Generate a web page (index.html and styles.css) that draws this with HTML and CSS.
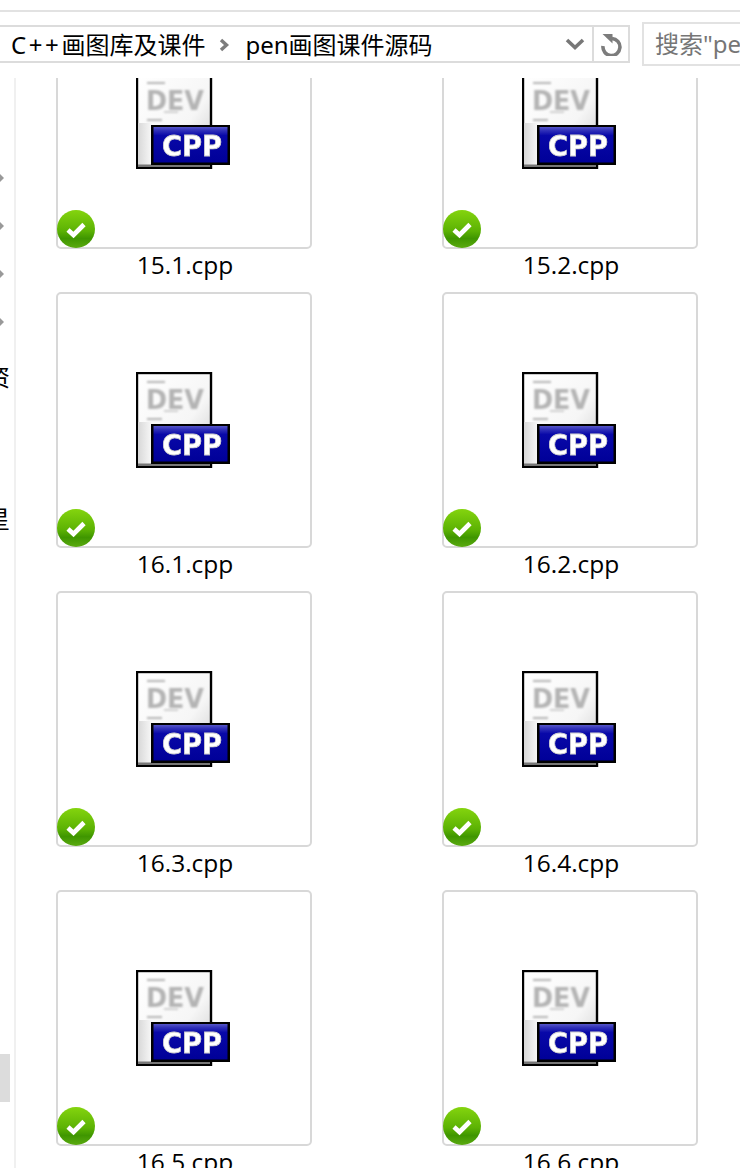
FILE: index.html
```html
<!DOCTYPE html>
<html lang="zh-CN">
<head>
    <meta charset="UTF-8">
    <meta name="viewport" content="width=device-width, initial-scale=1.0">
    <title>pen画图课件源码</title>
    <link rel="stylesheet" href="styles.css">
</head>
<body>
    <svg class="sprites" width="0" height="0" aria-hidden="true">
        <defs>
            <linearGradient id="pageFill" x1="0" y1="0" x2="1" y2="1">
                <stop offset="0" stop-color="#ffffff"/>
                <stop offset="0.6" stop-color="#f6f6f6"/>
                <stop offset="1" stop-color="#c8c8c8"/>
            </linearGradient>
            <linearGradient id="stripFill" x1="0" y1="0" x2="1" y2="0">
                <stop offset="0" stop-color="#d8d8d8"/>
                <stop offset="1" stop-color="#f8f8f8"/>
            </linearGradient>
            <linearGradient id="badgeFill" x1="0" y1="0" x2="0" y2="1">
                <stop offset="0" stop-color="#5656c8"/>
                <stop offset="0.1" stop-color="#3030b8"/>
                <stop offset="0.24" stop-color="#0808a8"/>
                <stop offset="1" stop-color="#000098"/>
            </linearGradient>
            <linearGradient id="okFill" x1="0" y1="0" x2="0" y2="1">
                <stop offset="0" stop-color="#84d40e"/>
                <stop offset="0.55" stop-color="#5cb204"/>
                <stop offset="0.75" stop-color="#3f9600"/>
                <stop offset="1" stop-color="#5aaa10"/>
            </linearGradient>
            <filter id="smudge"><feGaussianBlur stdDeviation="1.2"/></filter>
            <filter id="soft"><feGaussianBlur stdDeviation="0.3"/></filter>

            <symbol id="cppIcon" viewBox="0 0 96 96">
                <rect x="1" y="1" width="74" height="94" fill="url(#pageFill)" stroke="#000" stroke-width="2.4"/>
                <rect x="2" y="50" width="14" height="42" fill="url(#stripFill)"/>
                <rect x="2" y="91.5" width="72" height="2.5" fill="#777"/>
                <g filter="url(#smudge)" fill="#b4b4b4">
                    <rect x="11" y="9" width="18" height="2"/>
                    <rect x="11" y="46" width="15" height="2"/>
                    <rect x="28" y="38" width="14" height="2" opacity="0.6"/>
                </g>
                <text class="dev-text" x="39" y="37" text-anchor="middle" textLength="58" lengthAdjust="spacingAndGlyphs" filter="url(#smudge)">DEV</text>
                <rect x="15" y="52" width="79" height="40" fill="#000"/>
                <rect x="17.5" y="54" width="74" height="35.5" fill="url(#badgeFill)"/>
                <text class="cpp-text" x="56" y="83" text-anchor="middle" textLength="60" lengthAdjust="spacingAndGlyphs" filter="url(#soft)">CPP</text>
            </symbol>

            <symbol id="okBadge" viewBox="0 0 38 38">
                <circle cx="19" cy="19" r="19" fill="url(#okFill)"/>
                <path d="M11 20 L16.5 25 L27 14.5" fill="none" stroke="#fff" stroke-width="4.6"/>
            </symbol>
        </defs>
    </svg>

    <header class="toolbar">
        <div class="toolbar-row">
            <div class="address">
                <div class="crumbs">
                    <span><span class="plus">C++</span>画图库及课件</span>
                    <svg class="crumb-sep" viewBox="0 0 12 14"><path d="M3 2 L8.5 7 L3 12" fill="none" stroke="#7c7c7c" stroke-width="3.4"/></svg>
                    <span>pen画图课件源码</span>
                </div>
                <svg class="drop" viewBox="0 0 20 12"><path d="M2 2 L10 9.5 L18 2" fill="none" stroke="#777" stroke-width="3.6"/></svg>
                <div class="refresh">
                    <svg viewBox="0 0 24 24"><path d="M13 6.5 A8.5 8.5 0 1 1 4 14" fill="none" stroke="#7c7c7c" stroke-width="3.6"/><path d="M3.5 2 H13.5 V11.5 Z" fill="#7c7c7c"/></svg>
                </div>
            </div>
            <div class="search">搜索"pen画图课件源码"</div>
        </div>
    </header>

    <div class="main">
        <nav class="sidebar">
            <div class="nav-row"><span class="arrow"></span></div>
            <div class="nav-row"><span class="arrow"></span></div>
            <div class="nav-row"><span class="arrow"></span></div>
            <div class="nav-row"><span class="arrow"></span></div>
            <div class="nav-row nav-text">资</div>
            <div class="nav-gap"></div>
            <div class="nav-row nav-text">星</div>
            <div class="nav-active"></div>
        </nav>

        <section class="files">
            <div class="grid">
                <figure class="file">
                    <div class="thumb"><svg class="doc"><use href="#cppIcon"/></svg><svg class="ok"><use href="#okBadge"/></svg></div>
                    <figcaption>15.1.cpp</figcaption>
                </figure>
                <figure class="file">
                    <div class="thumb"><svg class="doc"><use href="#cppIcon"/></svg><svg class="ok"><use href="#okBadge"/></svg></div>
                    <figcaption>15.2.cpp</figcaption>
                </figure>
                <figure class="file">
                    <div class="thumb"><svg class="doc"><use href="#cppIcon"/></svg><svg class="ok"><use href="#okBadge"/></svg></div>
                    <figcaption>16.1.cpp</figcaption>
                </figure>
                <figure class="file">
                    <div class="thumb"><svg class="doc"><use href="#cppIcon"/></svg><svg class="ok"><use href="#okBadge"/></svg></div>
                    <figcaption>16.2.cpp</figcaption>
                </figure>
                <figure class="file">
                    <div class="thumb"><svg class="doc"><use href="#cppIcon"/></svg><svg class="ok"><use href="#okBadge"/></svg></div>
                    <figcaption>16.3.cpp</figcaption>
                </figure>
                <figure class="file">
                    <div class="thumb"><svg class="doc"><use href="#cppIcon"/></svg><svg class="ok"><use href="#okBadge"/></svg></div>
                    <figcaption>16.4.cpp</figcaption>
                </figure>
                <figure class="file">
                    <div class="thumb"><svg class="doc"><use href="#cppIcon"/></svg><svg class="ok"><use href="#okBadge"/></svg></div>
                    <figcaption>16.5.cpp</figcaption>
                </figure>
                <figure class="file">
                    <div class="thumb"><svg class="doc"><use href="#cppIcon"/></svg><svg class="ok"><use href="#okBadge"/></svg></div>
                    <figcaption>16.6.cpp</figcaption>
                </figure>
            </div>
        </section>
    </div>
</body>
</html>
```

FILE: styles.css
```css
html, body {
    margin: 0;
    height: 100%;
    overflow: hidden;
}

body {
    display: flex;
    flex-direction: column;
    background: #fff;
    color: #000;
    font-family: "Open Sans", "Noto Sans CJK SC", sans-serif;
}

.sprites {
    position: absolute;
}

.cpp-text {
    font-family: "DejaVu Sans", sans-serif;
    font-size: 28px;
    font-weight: bold;
    fill: #fff;
    stroke: #d0d0d0;
    stroke-width: 0.8px;
}

.dev-text {
    font-family: "DejaVu Sans", sans-serif;
    font-size: 26px;
    font-weight: bold;
    fill: #b4b4b4;
}

/* toolbar */
.toolbar {
    flex: none;
    height: 78px;
    box-sizing: border-box;
    padding-top: 10px;
}

.toolbar-row {
    height: 56px;
    box-sizing: border-box;
    border-top: 2px solid #e2e2e2;
    padding-top: 12px;
    display: flex;
    align-items: flex-start;
    gap: 12px;
}

.address {
    flex: none;
    width: 630px;
    height: 38px;
    margin-top: 1px;
    box-sizing: border-box;
    border: 2px solid #dcdcdc;
    border-left: none;
    display: flex;
    align-items: center;
    font-family: "Noto Sans", "Noto Sans CJK SC", sans-serif;
}

.crumbs {
    flex: 1;
    display: flex;
    align-items: center;
    padding: 2px 0 0 11px;
    font-size: 24px;
    line-height: 30px;
    white-space: nowrap;
}

.plus {
    letter-spacing: 2.6px;
}

.crumb-sep {
    width: 12px;
    height: 14px;
    margin: 0 15px 0 13px;
}

.drop {
    width: 20px;
    height: 12px;
    margin-right: 7px;
}

.refresh {
    width: 36px;
    height: 100%;
    box-sizing: border-box;
    border-left: 2px solid #dcdcdc;
    display: flex;
    align-items: center;
    justify-content: center;
}

.refresh svg {
    width: 24px;
    height: 24px;
}

.search {
    flex: none;
    width: 200px;
    height: 44px;
    margin-top: -2px;
    box-sizing: border-box;
    border: 2px solid #e2e2e2;
    padding-left: 11px;
    font-family: "Noto Sans", "Noto Sans CJK SC", sans-serif;
    font-size: 24px;
    line-height: 40px;
    color: #767676;
    white-space: nowrap;
}

/* main area */
.main {
    flex: 1;
    min-height: 0;
    display: flex;
}

.sidebar {
    flex: none;
    width: 16px;
    box-sizing: border-box;
    border-right: 2px solid #f0f0f0;
    padding-top: 76px;
    overflow: hidden;
}

.nav-row {
    height: 48px;
    display: flex;
    align-items: center;
}

.arrow {
    width: 0;
    height: 0;
    margin-left: -4px;
    border-left: 8px solid #999;
    border-top: 8px solid transparent;
    border-bottom: 8px solid transparent;
}

.nav-text {
    margin-left: -14px;
    padding-top: 10px;
    box-sizing: border-box;
    font-size: 24px;
    white-space: nowrap;
    font-family: "Noto Sans CJK SC", sans-serif;
}

.nav-gap {
    height: 94px;
}

.nav-active {
    width: 10px;
    height: 48px;
    margin-top: 518px;
    background: #dcdcdc;
}

.files {
    flex: 1;
    min-width: 0;
    overflow: hidden;
}

.grid {
    display: grid;
    grid-template-columns: 256px 256px;
    column-gap: 130px;
    row-gap: 0;
    margin: -85px 0 0 40px;
}

.file {
    margin: 0;
    height: 299px;
}

.thumb {
    position: relative;
    width: 256px;
    height: 256px;
    box-sizing: border-box;
    border: 2px solid #d8d8d8;
    border-radius: 5px;
    display: flex;
    align-items: center;
    justify-content: center;
}

.doc {
    width: 96px;
    height: 96px;
}

.ok {
    position: absolute;
    left: -1px;
    bottom: -1px;
    width: 38px;
    height: 38px;
}

figcaption {
    padding-left: 2px;
    text-align: center;
    font-size: 24.5px;
    line-height: 32px;
}
```
